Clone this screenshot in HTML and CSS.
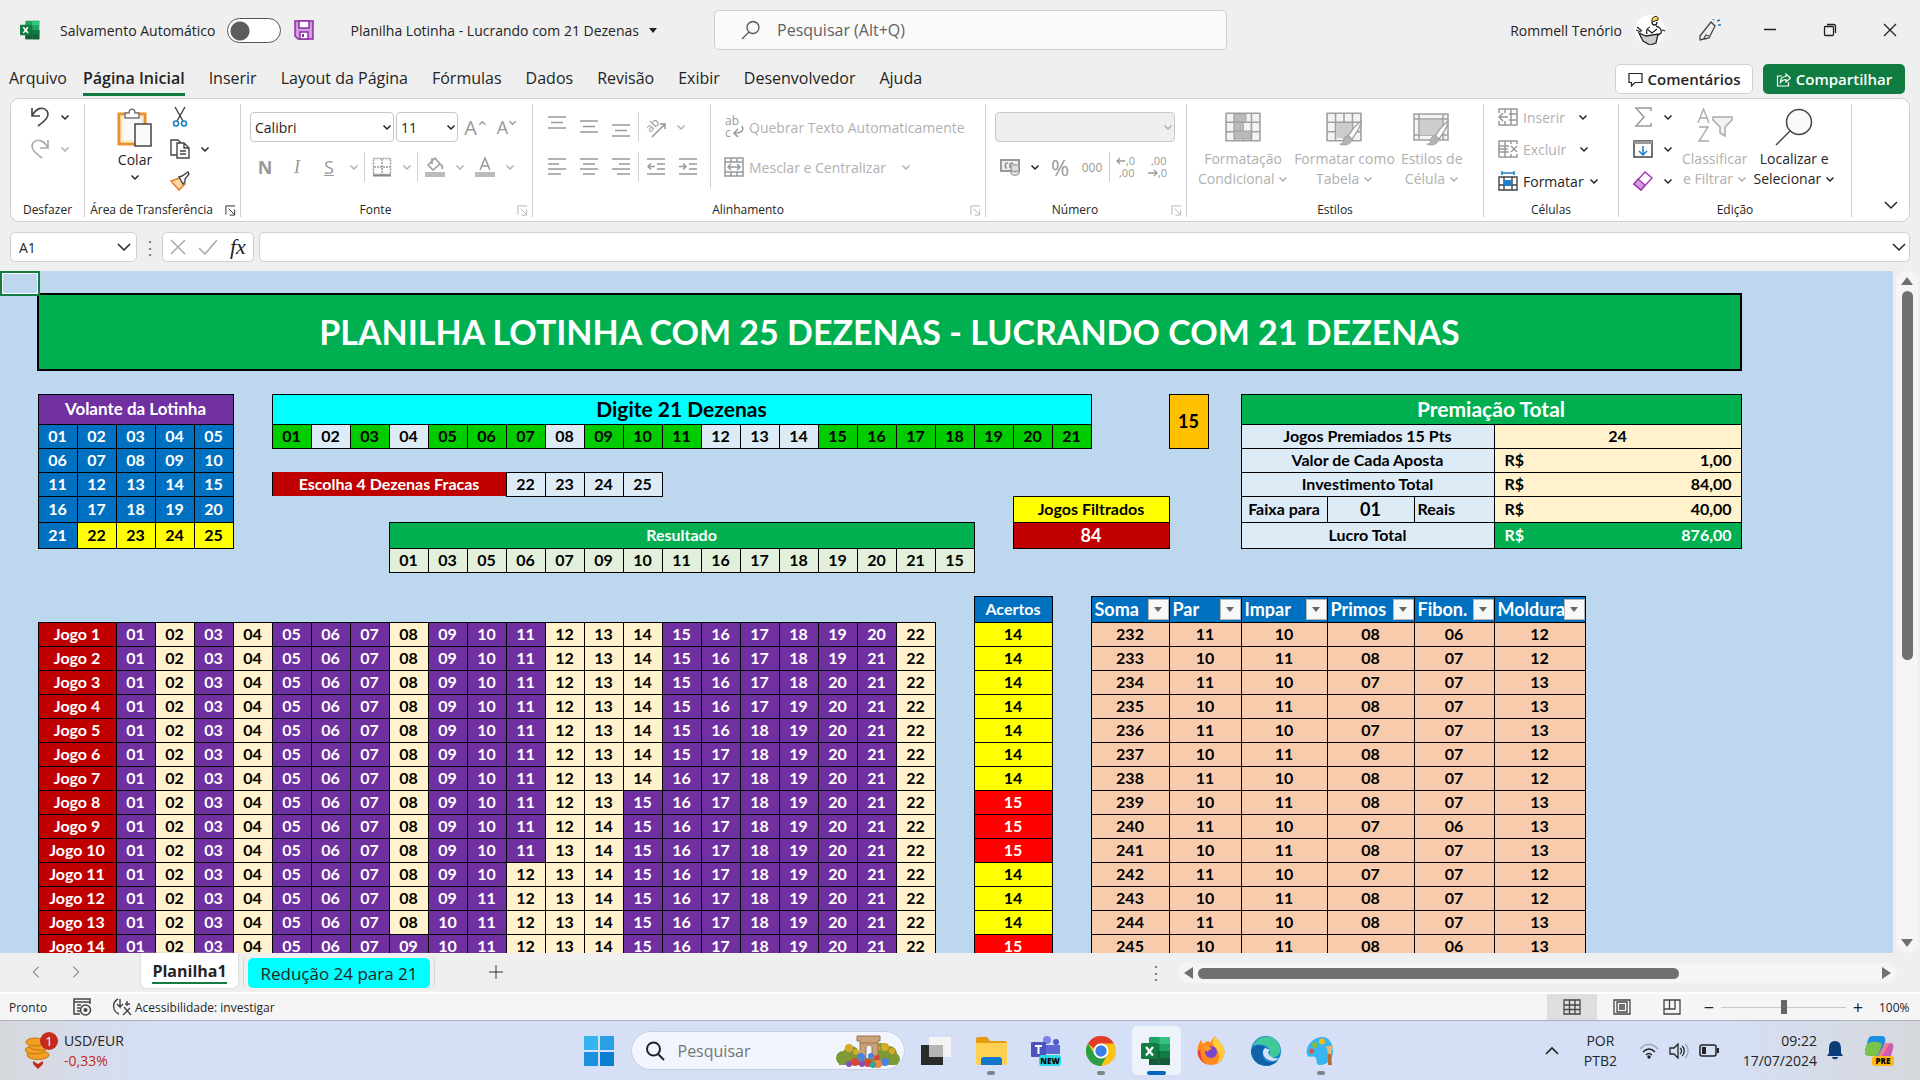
FILE: index.html
```html
<!DOCTYPE html>
<html lang="pt-BR">
  <head>
    <meta charset="UTF-8" />
    <meta name="viewport" content="width=device-width, initial-scale=1.0" />
    <title>Planilha Lotinha - Lucrando com 21 Dezenas</title>
    <link rel="stylesheet" href="styles.css">
  </head>
  <body>
    <svg class="sprite" aria-hidden="true">
      <symbol id="chev" viewBox="0 0 10 10"><path d="M1.5 3.5 5 7l3.500-3.500" fill="none" stroke="currentColor" stroke-width="1.500"/></symbol>
      <symbol id="chev-wide" viewBox="0 0 16 16"><path d="m2 5 6 6 6-6" fill="none" stroke="currentColor" stroke-width="1.500"/></symbol>
      <symbol id="launch" viewBox="0 0 12 12"><path d="M1 10.500V1h10M4 4l6 6M10.500 5v6H5" fill="none" stroke="currentColor"/></symbol>
      <symbol id="excel" viewBox="0 0 30 30">
        <path d="M9 1h19a1 1 0 0 1 1 1v27H8V2z" fill="#21a366"/><path d="M8 8h10.500v7H8z" fill="#107c41"/><path d="M18.500 1H28a1 1 0 0 1 1 1v6H18.500z" fill="#33c481"/><path d="M18.500 15H29v7H18.500zM8 15h10.500v14H8z" fill="#185c37"/><path d="M18.500 15H29v7H18.500z" fill="#107c41"/><path d="M18.500 22H29v7H18.500z" fill="#185c37"/>
        <rect x="0" y="7" width="17" height="16" rx="1.500" fill="#107c41"/><path d="m5 11 7 8.500M12 11l-7 8.500" stroke="#fff" stroke-width="2.300"/>
      </symbol>
      <symbol id="grid" viewBox="0 0 34 28"><path d="M1 1h32v26H1z" fill="#f3f3f3"/><path d="M1 1h32v26H1zM1 9.500h32M1 18.500h32M9 1v26M17 1v26M25 1v26" fill="none" stroke="#a0a0a0" stroke-width="1.500"/></symbol>
      <symbol id="brush" viewBox="0 0 24 28"><path d="M22.500 1C18 5 12 12 9 17l4 3.500C17 15 22 8 23 2z" fill="#fff" stroke="#a0a0a0" stroke-width="1.500"/><path d="M9 17c-4 0-5 3-5 6-1 2-2 3-4 3 4 2 12 1 13-5.500z" fill="#b5b5b5" stroke="#a0a0a0"/></symbol>
    </svg>

    <header class="titlebar">
      <svg class="i20"><use href="#excel"/></svg>
      <label class="autosave">Salvamento Automático <input type="checkbox" /></label>
      <button class="plain" aria-label="Salvar">
        <svg class="i20" viewBox="0 0 20 20"><path d="M1 1h18v18H4l-3-3z" fill="#d59be0" stroke="#8b2fa0" stroke-width="1.500"/><path d="M5 1h10v7H5zM6 12h8v7H6z" fill="#fff" stroke="#8b2fa0" stroke-width="1.500"/><path d="M8 14h2v3H8z" fill="#8b2fa0"/></svg>
      </button>
      <button class="plain doc-name">Planilha Lotinha - Lucrando com 21 Dezenas <svg width="8" height="5"><path d="M0 0h8L4 5z" fill="#242424"/></svg></button>
      <div class="search">
        <svg width="20" height="20" viewBox="0 0 20 20"><circle cx="12" cy="7.500" r="6" fill="none" stroke="#555" stroke-width="1.300"/><path d="m8 12-7 7" stroke="#555" stroke-width="1.300"/></svg>
        <input type="text" placeholder="Pesquisar (Alt+Q)" aria-label="Pesquisar" />
      </div>
      <div class="account">
        <span class="user">Rommell Tenório</span>
        <svg width="30" height="30" viewBox="0 0 30 30"><circle cx="15" cy="15" r="15" fill="#fff"/><path d="M17 4c2-4 7-3 6 1l-6 2z" fill="#ffd84a" stroke="#222"/><path d="M17 7c0 4 5 4 5 0M15 12c-3 1-4 4-3 7M21 11c4 1 6 4 5 7l-4 3M12 14l5 4 5-4M2 12l5 4M1 15l5 2M27 15l3 1" fill="none" stroke="#222" stroke-width="1.300"/><path d="m4 18 7 3 12-2-2 9-6 2-7-4z" fill="#ccc" stroke="#222" stroke-width="1.300"/></svg>
        <svg width="24" height="22" viewBox="0 0 24 22"><path d="M2 17 13 3l4 4-6 12-5 1-4 1zM6 19l2-3 3 1M13 3l4 4" fill="none" stroke="#444" stroke-width="1.300"/><path d="m15 1 1-1M19 2l3-1M20 6h3" stroke="#1e7fc8" stroke-width="1.600"/></svg>
      </div>
      <div class="window-buttons">
        <button class="plain" aria-label="Minimizar"><svg width="14" height="14"><path d="M1 6.500h12" stroke="#222" stroke-width="1.500"/></svg></button>
        <button class="plain" aria-label="Restaurar"><svg width="14" height="14"><path d="M1.500 4.500a1 1 0 0 1 1-1h7a1 1 0 0 1 1 1v7a1 1 0 0 1-1 1h-7a1 1 0 0 1-1-1zM4 1.500h6.500a2 2 0 0 1 2 2V10" fill="none" stroke="#222" stroke-width="1.300"/></svg></button>
        <button class="plain" aria-label="Fechar"><svg width="14" height="14"><path d="m1 1 12 12M13 1 1 13" stroke="#222" stroke-width="1.300"/></svg></button>
      </div>
    </header>

    <nav class="menu">
      <a href="#">Arquivo</a>
      <a href="#" class="active">Página Inicial</a>
      <a href="#">Inserir</a>
      <a href="#">Layout da Página</a>
      <a href="#">Fórmulas</a>
      <a href="#">Dados</a>
      <a href="#">Revisão</a>
      <a href="#">Exibir</a>
      <a href="#">Desenvolvedor</a>
      <a href="#">Ajuda</a>
      <button class="comments"><svg width="15" height="15"><path d="M1 1.500h13v9H7l-3.500 3.500v-3.500H1z" fill="none" stroke="#222" stroke-width="1.200"/></svg>Comentários</button>
      <button class="share"><svg width="15" height="15"><path d="M6 4H1.500v10h11v-4M4.500 10.500c0-4 2-6 5.500-6V2l4.500 4L10 10V7.500c-3 0-4 1-5.500 3z" fill="none" stroke="#fff" stroke-width="1.200"/></svg>Compartilhar</button>
    </nav>

    <section class="ribbon">
      <div class="group g-undo">
        <div class="stack">
          <div class="row"><button class="tool" aria-label="Desfazer"><svg width="20" height="22"><path d="M2 2v8h8M2 10C6 2 13 0 17 5c3 5-1 9-9 15" fill="none" stroke="#444" stroke-width="1.600"/></svg></button><button class="drop"><svg><use href="#chev"/></svg></button></div>
          <div class="row off"><button class="tool" aria-label="Refazer"><svg width="20" height="22"><path d="M18 2v8h-8M18 10C14 2 7 0 3 5c-3 5 1 9 9 15" fill="none" stroke="#aaa" stroke-width="1.600"/></svg></button><button class="drop"><svg><use href="#chev"/></svg></button></div>
        </div>
        <h2>Desfazer</h2>
      </div>

      <div class="group g-clip">
        <div class="cols">
          <button class="big">
            <svg width="36" height="40" viewBox="0 0 36 40"><path d="M2 6h26v30H2z" fill="#fff" stroke="#e8912d" stroke-width="3"/><path d="M5 9h20v24H5z" fill="#fafafa" stroke="#fbd7a5"/><path d="M8 10V5h4c0-5 6-5 6 0h4v5z" fill="#fff" stroke="#777" stroke-width="1.500"/><path d="M18 16h16v22H18z" fill="#fafafa" stroke="#444" stroke-width="1.500"/></svg>
            <span>Colar</span><svg class="c"><use href="#chev"/></svg>
          </button>
          <div class="stack">
            <div class="row"><button class="tool" aria-label="Recortar"><svg width="16" height="20"><path d="M3 0l8 14M13 0 5 14" stroke="#444" stroke-width="1.400"/><circle cx="4" cy="16.500" r="2.500" fill="none" stroke="#1e7fc8" stroke-width="1.600"/><circle cx="12" cy="16.500" r="2.500" fill="none" stroke="#1e7fc8" stroke-width="1.600"/></svg></button></div>
            <div class="row"><button class="tool" aria-label="Copiar"><svg width="20" height="20"><path d="M7 16H1V1h7l3 3M7 4h7l5 5v10H7zM14 4v5h5M10 12h6M10 15h6" fill="none" stroke="#444" stroke-width="1.400"/></svg></button><button class="drop"><svg><use href="#chev"/></svg></button></div>
            <div class="row"><button class="tool" aria-label="Pincel de Formatação"><svg width="20" height="20"><path d="m1 10 9-3 5 6-6 6z" fill="#fbd7a5" stroke="#e8822d" stroke-width="1.600"/><path d="m9 6 3-1 6-4 1 2-4 5v3l-2 2z" fill="#fff" stroke="#444" stroke-width="1.400"/></svg></button></div>
          </div>
        </div>
        <h2 class="launcher">Área de Transferência<svg class="l"><use href="#launch"/></svg></h2>
      </div>

      <div class="group g-font">
        <div class="lines">
          <div class="row">
            <div class="combo font-name"><select aria-label="Fonte"><option>Calibri</option></select><svg><use href="#chev"/></svg></div>
            <div class="combo font-size"><select aria-label="Tamanho da fonte"><option>11</option></select><svg><use href="#chev"/></svg></div>
            <button class="tool glyph big-a">A<svg><use href="#chev" transform="rotate(180 5 5)"/></svg></button>
            <button class="tool glyph">A<svg><use href="#chev"/></svg></button>
          </div>
          <div class="row off">
            <button class="tool glyph"><b>N</b></button>
            <button class="tool glyph serif"><i>I</i></button>
            <button class="tool glyph"><u>S</u></button>
            <button class="drop"><svg><use href="#chev"/></svg></button>
            <span class="sep"></span>
            <button class="tool" aria-label="Bordas"><svg width="20" height="20"><path d="M1.500 1.500h17v16h-17zM10 2v16M2 10h16" fill="none" stroke="#999" stroke-width="1.500" stroke-dasharray="2 1"/><path d="M1 18.500h18" stroke="#888" stroke-width="2"/></svg></button>
            <button class="drop"><svg><use href="#chev"/></svg></button>
            <span class="sep"></span>
            <button class="tool" aria-label="Cor de Preenchimento"><svg width="20" height="20"><path d="m3 8 7-7 5 6-7 6zM7 1v6M15 7c2 1 3 3 2 5" fill="none" stroke="#999" stroke-width="1.500"/><path d="M0 15h20v5H0z" fill="#bbb"/></svg></button>
            <button class="drop"><svg><use href="#chev"/></svg></button>
            <button class="tool" aria-label="Cor da Fonte"><svg width="20" height="20"><path d="M5 13 10 1l5 12M6.500 9h7" fill="none" stroke="#999" stroke-width="1.500"/><path d="M0 15h20v5H0z" fill="#bbb"/></svg></button>
            <button class="drop"><svg><use href="#chev"/></svg></button>
          </div>
        </div>
        <h2 class="launcher">Fonte<svg class="l dim"><use href="#launch"/></svg></h2>
      </div>

      <div class="group g-align">
        <div class="cols off">
          <div class="lines">
            <div class="row">
              <button class="tool top"><svg width="18" height="14"><path d="M0 1h18M3 6.500h12M0 12h18"/></svg></button>
              <button class="tool"><svg width="18" height="14"><path d="M0 1h18M3 6.500h12M0 12h18"/></svg></button>
              <button class="tool bottom"><svg width="18" height="14"><path d="M0 1h18M3 6.500h12M0 12h18"/></svg></button>
              <span class="sep"></span>
              <button class="tool" aria-label="Orientação"><svg width="26" height="26" viewBox="0 0 26 26"><text x="4" y="17" font-size="12" transform="rotate(-45 8 14)" fill="#999">ab</text><path d="M9 23 22 10M17 10h5v5"/></svg></button>
              <button class="drop"><svg><use href="#chev"/></svg></button>
            </div>
            <div class="row">
              <button class="tool"><svg width="18" height="18"><path d="M0 1h18M0 6h11M0 11h18M0 16h13"/></svg></button>
              <button class="tool"><svg width="18" height="18"><path d="M0 1h18M3 6h12M0 11h18M3 16h12"/></svg></button>
              <button class="tool"><svg width="18" height="18"><path d="M0 1h18M7 6h11M0 11h18M5 16h13"/></svg></button>
              <span class="sep"></span>
              <button class="tool"><svg width="18" height="18"><path d="M0 1h18M10 6h8M10 11h8M0 16h18M1 8.500h7M4 5.500l-3 3 3 3"/></svg></button>
              <button class="tool"><svg width="18" height="18"><path d="M0 1h18M10 6h8M10 11h8M0 16h18M0 8.500h7M4 5.500l3 3-3 3"/></svg></button>
            </div>
          </div>
          <div class="lines wide">
            <button class="wide-tool"><svg width="20" height="28" viewBox="0 0 20 28"><text x="1" y="12" font-size="12" fill="#999">ab</text><text x="1" y="24" font-size="12" fill="#999">c</text><path d="M18 13c2 4 0 7-7 7M14 16l-4 4 4 4"/></svg>Quebrar Texto Automaticamente</button>
            <button class="wide-tool"><svg width="20" height="20"><path d="M1 1h18v18H1zM1 5h18M1 15h18M7 1v4M13 1v4M7 15v4M13 15v4M4 10h12M7 7l-3 3 3 3M13 7l3 3-3 3"/></svg>Mesclar e Centralizar<svg class="c"><use href="#chev"/></svg></button>
          </div>
        </div>
        <h2 class="launcher">Alinhamento<svg class="l dim"><use href="#launch"/></svg></h2>
      </div>

      <div class="group g-num">
        <div class="lines">
          <div class="row"><div class="combo number off"><select aria-label="Formato de Número" disabled><option></option></select><svg><use href="#chev"/></svg></div></div>
          <div class="row">
            <button class="tool" aria-label="Moeda"><svg width="20" height="18"><path d="M1 2h18v11H1z" fill="#eee" stroke="#999" stroke-width="2"/><path d="M8 5c-3-1-4 5-1 5M10 10V6l3-1" fill="none" stroke="#888" stroke-width="1.400"/><path d="M11 9c0-3 8-3 8 0v6c0 3-8 3-8 0z" fill="#ddd" stroke="#888"/><path d="M11 12c2 2 6 2 8 0" fill="none" stroke="#888"/></svg></button>
            <button class="drop"><svg><use href="#chev"/></svg></button>
            <button class="tool glyph pct">%</button>
            <button class="tool glyph zeros">000</button>
            <span class="sep"></span>
            <button class="tool" aria-label="Aumentar Casas Decimais"><svg width="22" height="28" viewBox="0 0 22 28"><text x="10" y="12" font-size="11" fill="#999">,0</text><text x="3" y="24" font-size="11" fill="#999">,00</text><path d="M1 8h8M4 5 1 8l3 3" fill="none" stroke="#999" stroke-width="1.300"/></svg></button>
            <button class="tool" aria-label="Diminuir Casas Decimais"><svg width="22" height="28" viewBox="0 0 22 28"><text x="3" y="12" font-size="11" fill="#999">,00</text><text x="10" y="24" font-size="11" fill="#999">,0</text><path d="M0 20h9M6 17l3 3-3 3" fill="none" stroke="#999" stroke-width="1.300"/></svg></button>
          </div>
        </div>
        <h2 class="launcher">Número<svg class="l dim"><use href="#launch"/></svg></h2>
      </div>

      <div class="group g-style">
        <div class="cols off bigs">
          <button class="big"><svg width="36" height="34"><use href="#grid" width="36" height="30"/><path d="M9 2h12v8H9zM9 10h7v9H9zM9 19h17v8H9z" fill="#bbb" stroke="#a0a0a0"/></svg><span>Formatação<br>Condicional <svg><use href="#chev"/></svg></span></button>
          <button class="big"><svg width="38" height="34"><use href="#grid" width="36" height="30"/><path d="M10 11h16v15H10z" fill="#ccc"/><use href="#brush" x="11" y="8" width="28" height="26"/></svg><span>Formatar como<br>Tabela <svg><use href="#chev"/></svg></span></button>
          <button class="big"><svg width="38" height="34"><path d="M1 2h34v26H1zM1 7h34M1 23h34M6 2v26M30 2v26" fill="#f3f3f3" stroke="#a0a0a0" stroke-width="1.500"/><path d="M7 8h22v15H7z" fill="#ccc"/><use href="#brush" x="11" y="8" width="28" height="26"/></svg><span>Estilos de<br>Célula <svg><use href="#chev"/></svg></span></button>
        </div>
        <h2>Estilos</h2>
      </div>

      <div class="group g-cells">
        <div class="stack">
          <div class="row off"><button class="wide-tool"><svg width="20" height="18"><path d="M1 1h18v16H1zM1 6h18M1 12h18M7 1v16M13 1v16"/><path d="M0 5h11v8H0z" fill="#fff" stroke="none"/><path d="M1 9h9M5 5 1 9l4 4"/></svg>Inserir</button><button class="drop dark"><svg><use href="#chev"/></svg></button></div>
          <div class="row off"><button class="wide-tool"><svg width="20" height="18"><path d="M1 1h18v16H1zM1 6h18M1 12h18M7 1v16M13 1v16"/><path d="M11 4h9v10h-9z" fill="#fff" stroke="none"/><path d="m13 6 6 6M19 6l-6 6M0 9h10"/></svg>Excluir</button><button class="drop dark"><svg><use href="#chev"/></svg></button></div>
          <div class="row"><button class="wide-tool"><svg width="20" height="20"><path d="M1 6h18v13H1zM1 14h18M6 6v13M14 6v13" fill="none" stroke="#444" stroke-width="1.400"/><path d="M6 9h8v6H6z" fill="#1e7fc8"/><path d="M3 2h14M4 0v4M16 0v4" stroke="#1e7fc8" stroke-width="1.400"/></svg>Formatar<svg class="c"><use href="#chev"/></svg></button></div>
        </div>
        <h2>Células</h2>
      </div>

      <div class="group g-edit">
        <div class="cols">
          <div class="stack">
            <div class="row"><button class="tool" aria-label="AutoSoma"><svg width="18" height="20"><path d="M17 4V1H2l8 9-8 9h15v-3" fill="none" stroke="#999" stroke-width="1.500"/></svg></button><button class="drop"><svg><use href="#chev"/></svg></button></div>
            <div class="row"><button class="tool" aria-label="Preencher"><svg width="20" height="18"><path d="M1 1h18v16H1z" fill="#fff" stroke="#444" stroke-width="1.500"/><path d="M1 1h18v3H1z" fill="#999"/><path d="M10 6v8M6 11l4 4 4-4" fill="none" stroke="#1e7fc8" stroke-width="1.500"/></svg></button><button class="drop"><svg><use href="#chev"/></svg></button></div>
            <div class="row"><button class="tool" aria-label="Limpar"><svg width="20" height="20"><path d="m1 13 11-12 7 6L8 19z" fill="#fff" stroke="#a33fb5" stroke-width="1.500"/><path d="m1 13 4-5 7 6-4 5z" fill="#d59be0" stroke="#a33fb5" stroke-width="1.500"/></svg></button><button class="drop"><svg><use href="#chev"/></svg></button></div>
          </div>
          <div class="bigs">
            <button class="big off"><svg width="36" height="36"><path d="M1 15 6.500 1 12 15M3 10h7M2 19h9L2 33h10" fill="none" stroke="#aaa" stroke-width="1.400"/><path d="M16 9h19v3l-7 7v9l-5-3v-6l-7-7z" fill="#f3f3f3" stroke="#aaa" stroke-width="1.500"/></svg><span>Classificar<br>e Filtrar <svg><use href="#chev"/></svg></span></button>
            <button class="big"><svg width="38" height="38"><circle cx="24" cy="14" r="12.500" fill="#fafafa" stroke="#444" stroke-width="1.500"/><path d="M15 23 1 37" stroke="#444" stroke-width="1.500"/></svg><span>Localizar e<br>Selecionar <svg><use href="#chev"/></svg></span></button>
          </div>
        </div>
        <h2>Edição</h2>
      </div>
      <button class="plain collapse" aria-label="Recolher"><svg width="16" height="16"><use href="#chev-wide"/></svg></button>
    </section>

    <section class="formula-row">
      <div class="name-box"><input type="text" value="A1" aria-label="Caixa de nome" /><svg width="16" height="16"><use href="#chev-wide"/></svg></div>
      <span class="dots">⋮</span>
      <div class="fx">
        <svg width="16" height="16"><path d="m1 1 14 14M15 1 1 15" stroke="#aaa" stroke-width="1.500"/></svg>
        <svg width="20" height="16"><path d="m1 9 6 6L19 1" fill="none" stroke="#aaa" stroke-width="1.500"/></svg>
        <i>fx</i>
      </div>
      <div class="formula"><input type="text" aria-label="Barra de fórmulas" /><svg width="16" height="16"><use href="#chev-wide"/></svg></div>
    </section>

    <main class="workspace">
      <div class="sheet">
        <table>
          <colgroup>
            <col class="c-a"><col class="c-num" span="30"><col class="c-gap"><col class="c-impar"><col class="c-primos"><col class="c-fibon"><col class="c-moldura"><col class="c-valor">
          </colgroup>
          <tbody>
            <tr class="h23"><td class="selected"></td><td colspan="36"></td></tr>
            <tr class="h76"><td></td><td colspan="36" class="banner">PLANILHA LOTINHA COM 25 DEZENAS - LUCRANDO COM 21 DEZENAS</td></tr>
            <tr><td colspan="37"></td></tr>
            <tr class="h30">
              <td></td><td colspan="5" class="b purple t17">Volante da Lotinha</td>
              <td></td><td colspan="21" class="b cyan t21">Digite 21 Dezenas</td>
              <td colspan="2"></td><td rowspan="2" class="b orange t18">15</td>
              <td></td><td colspan="5" class="b green t21">Premiação Total</td>
            </tr>
            <tr>
              <td></td><td class="b blue">01</td><td class="b blue">02</td><td class="b blue">03</td><td class="b blue">04</td><td class="b blue">05</td>
              <td id="picks"></td>
              <td colspan="2"></td><td></td>
              <td colspan="3" class="b pale">Jogos Premiados 15 Pts</td><td colspan="2" class="b cream">24</td>
            </tr>
            <tr>
              <td></td><td class="b blue">06</td><td class="b blue">07</td><td class="b blue">08</td><td class="b blue">09</td><td class="b blue">10</td>
              <td colspan="26"></td>
              <td colspan="3" class="b pale">Valor de Cada Aposta</td><td colspan="2" class="b cream money"><div><span>R$</span><span>1,00</span></div></td>
            </tr>
            <tr>
              <td></td><td class="b blue">11</td><td class="b blue">12</td><td class="b blue">13</td><td class="b blue">14</td><td class="b blue">15</td>
              <td></td><td colspan="6" class="b weak">Escolha 4 Dezenas Fracas</td>
              <td class="b pale">22</td><td class="b pale">23</td><td class="b pale">24</td><td class="b pale">25</td>
              <td colspan="15"></td>
              <td colspan="3" class="b pale">Investimento Total</td><td colspan="2" class="b cream money"><div><span>R$</span><span>84,00</span></div></td>
            </tr>
            <tr class="h26">
              <td></td><td class="b blue">16</td><td class="b blue">17</td><td class="b blue">18</td><td class="b blue">19</td><td class="b blue">20</td>
              <td colspan="20"></td><td colspan="4" class="b yellow">Jogos Filtrados</td>
              <td colspan="2"></td>
              <td class="b pale">Faixa para</td><td class="b pale t18">01</td><td class="b pale left">Reais</td><td colspan="2" class="b cream money"><div><span>R$</span><span>40,00</span></div></td>
            </tr>
            <tr class="h26">
              <td></td><td class="b blue">21</td><td class="b yellow">22</td><td class="b yellow">23</td><td class="b yellow">24</td><td class="b yellow">25</td>
              <td colspan="4"></td><td colspan="15" class="b green">Resultado</td>
              <td></td><td colspan="4" class="b dark-red t18">84</td>
              <td colspan="2"></td>
              <td colspan="3" class="b pale">Lucro Total</td><td colspan="2" class="b green money"><div><span>R$</span><span>876,00</span></div></td>
            </tr>
            <tr><td colspan="10"></td><td id="result"></td><td colspan="12"></td></tr>
            <tr><td colspan="37"></td></tr>
            <tr class="h26 heads">
              <td colspan="25"></td><th colspan="2" class="b blue">Acertos</th><td></td>
              <th colspan="2" class="b blue"><div><span>Soma</span><button aria-label="Filtrar Soma"></button></div></th>
              <th colspan="2" class="b blue"><div><span>Par</span><button aria-label="Filtrar Par"></button></div></th>
              <th class="b blue"><div><span>Impar</span><button aria-label="Filtrar Impar"></button></div></th>
              <th class="b blue"><div><span>Primos</span><button aria-label="Filtrar Primos"></button></div></th>
              <th class="b blue"><div><span>Fibon.</span><button aria-label="Filtrar Fibon."></button></div></th>
              <th class="b blue"><div><span>Moldura</span><button aria-label="Filtrar Moldura"></button></div></th>
            </tr>
          </tbody>
          <tbody id="games"></tbody>
        </table>
      </div>
      <div class="vscroll"><span class="up"></span><span class="thumb"></span><span class="down"></span></div>
    </main>

    <section class="sheet-tabs">
      <button class="plain nav-prev" aria-label="Anterior"><svg width="14" height="14"><use href="#chev-wide"/></svg></button>
      <button class="plain nav-next" aria-label="Próxima"><svg width="14" height="14"><use href="#chev-wide"/></svg></button>
      <button class="sheet-tab current"><span>Planilha1</span></button>
      <button class="sheet-tab other">Redução 24 para 21</button>
      <button class="plain add" aria-label="Nova planilha"><svg width="14" height="14"><path d="M7 0v14M0 7h14" stroke="#333"/></svg></button>
      <span class="dots push">⋮</span>
      <div class="hscroll"><span class="left"></span><span class="thumb"></span><span class="right"></span></div>
    </section>

    <footer class="status">
      <span class="ready">Pronto</span>
      <svg width="19" height="18"><path d="M1 1h16v3H1zM1 4v12h6M4 7h4M4 10h3M4 13h3M17 4v2" fill="none" stroke="#444" stroke-width="1.500"/><circle cx="12.500" cy="12" r="5" fill="#f5f5f5" stroke="#444" stroke-width="1.500"/><circle cx="12.500" cy="12" r="2" fill="#444"/></svg>
      <svg class="access" width="20" height="18"><path d="M6 1C0 4 0 13 7 16M8 1v8l-3-3M8 9l3-3M12 9l7 8M18 10l-7 7M15 3v5M13 6h5" fill="none" stroke="#444" stroke-width="1.400"/></svg>
      <span>Acessibilidade: investigar</span>
      <div class="views">
        <button class="on" aria-label="Normal"><svg width="18" height="16"><path d="M1 1h16v14H1zM1 6h16M1 10.500h16M6.500 1v14M12 1v14" fill="none" stroke="#444" stroke-width="1.300"/></svg></button>
        <button aria-label="Layout da Página"><svg width="18" height="16"><path d="M1 1h16v14H1zM4 3h10v10H4zM6 6h6M6 8h6M6 10h6" fill="none" stroke="#444" stroke-width="1.300"/></svg></button>
        <button aria-label="Quebra de Página"><svg width="18" height="16"><path d="M1 1h16v14H1zM1 10h11V1M6.500 1v9" fill="none" stroke="#444" stroke-width="1.300"/></svg></button>
      </div>
      <button class="plain zoom-btn">−</button>
      <input type="range" min="10" max="190" value="100" aria-label="Zoom" />
      <button class="plain zoom-btn">+</button>
      <span class="percent">100%</span>
    </footer>

    <div class="taskbar">
      <div class="widget">
        <svg width="34" height="38" viewBox="0 0 34 38"><g fill="#f2a024" stroke="#c9730f"><ellipse cx="13" cy="23" rx="11" ry="4.500"/><ellipse cx="10" cy="18" rx="10" ry="4"/><ellipse cx="14" cy="14" rx="10" ry="4"/><ellipse cx="10" cy="10" rx="9" ry="4"/></g><path d="m8 29 5 3 5-3v3l-5 5-5-5z" fill="#c42b1c"/><circle cx="24" cy="9" r="9" fill="#c42b1c"/><text x="24" y="14" font-size="13" text-anchor="middle" fill="#fff">1</text></svg>
        <div>USD/EUR<br><span class="loss">-0,33%</span></div>
      </div>
      <div class="apps">
        <button class="app" aria-label="Iniciar"><svg width="30" height="30"><path d="M0 0h14v14H0z" fill="#36b4ef"/><path d="M16 0h14v14H16z" fill="#2a9fe6"/><path d="M0 16h14v14H0z" fill="#1b90dd"/><path d="M16 16h14v14H16z" fill="#0a7ed3"/></svg></button>
        <div class="task-search">
          <svg width="20" height="20"><circle cx="8.500" cy="8" r="6.500" fill="none" stroke="#222" stroke-width="2"/><path d="m13 13 6 6" stroke="#222" stroke-width="2"/></svg>
          <input type="text" placeholder="Pesquisar" aria-label="Pesquisar no Windows" />
          <svg width="64" height="34" viewBox="0 0 64 34">
            <g fill="#7d9a35"><circle cx="7" cy="24" r="7"/><circle cx="15" cy="20" r="8"/><circle cx="45" cy="17" r="8"/><circle cx="53" cy="20" r="8"/><circle cx="58" cy="25" r="6"/><path d="M3 24h58v7H3z"/></g>
            <g fill="#d9a927"><circle cx="13" cy="14" r="4"/><circle cx="20" cy="18" r="3"/><circle cx="49" cy="13" r="4"/><circle cx="41" cy="14" r="3"/><circle cx="56" cy="17" r="3"/></g>
            <path d="M21 2h23v5h-2v18h-6V14c0-4-6-4-6 0v11h-6V7h-3z" fill="#c9a27a" stroke="#9a744d"/><path d="M24 9h18" stroke="#9a744d"/>
            <g fill="#d8443c"><circle cx="19" cy="28" r="4"/><circle cx="32" cy="29" r="4"/><circle cx="41" cy="24" r="3"/></g><g fill="#4a83d8"><circle cx="25" cy="23" r="4"/><circle cx="49" cy="28" r="4"/><circle cx="35" cy="22" r="3"/></g><g fill="#8a4fb0"><circle cx="13" cy="30" r="3"/><circle cx="26" cy="30" r="3"/></g><circle cx="42" cy="30" r="4" fill="#ef8a3a"/><circle cx="37" cy="31" r="3" fill="#2aa6a6"/>
          </svg>
        </div>
        <button class="app" aria-label="Visão de tarefas"><svg width="30" height="28"><path d="M0 8h22v20H0z" fill="#2b2b2b"/><path d="M8 0h22v20H8z" fill="#f4f4f4"/><path d="M8 8h14v12H8z" fill="#b5b5b5"/></svg></button>
        <button class="app run" aria-label="Explorador de Arquivos"><svg width="31" height="28"><path d="M0 2a2 2 0 0 1 2-2h9l3 4h15a2 2 0 0 1 2 2v20H0z" fill="#e49b13"/><path d="M0 6h31v20a2 2 0 0 1-2 2H2a2 2 0 0 1-2-2z" fill="#ffd152"/><path d="M5 28v-5a3 3 0 0 1 3-3h15a3 3 0 0 1 3 3v5z" fill="#1277c9"/></svg></button>
        <button class="app" aria-label="Teams"><svg width="30" height="30"><circle cx="16" cy="4" r="4" fill="#7b83eb"/><circle cx="25" cy="6" r="3" fill="#5059c9"/><path d="M9 9h20v9H9z" fill="#5f68d2"/><rect y="6" width="15" height="15" rx="1" fill="#4b53bc"/><path d="M4 10h7M7.500 10v8" stroke="#fff" stroke-width="2"/><rect x="8" y="19" width="22" height="11" rx="3" fill="#27d9e8"/><text x="19" y="28" font-size="8" font-weight="800" text-anchor="middle">NEW</text></svg></button>
        <button class="app run" aria-label="Chrome"><svg width="30" height="30" viewBox="0 0 30 30"><circle cx="15" cy="15" r="15" fill="#fbc116"/><path d="M2 7.500A15 15 0 0 1 28 7.500H15a7.500 7.500 0 0 0-7 5z" fill="#e33b2e"/><path d="M2 7.500A15 15 0 0 0 15 30l6.500-11.500c-3 5-10 5-13 0z" fill="#2a9f48"/><circle cx="15" cy="15" r="7.500" fill="#fff"/><circle cx="15" cy="15" r="5.700" fill="#3a7de8"/></svg></button>
        <button class="app active" aria-label="Excel"><svg width="30" height="30"><use href="#excel"/></svg></button>
        <button class="app" aria-label="Firefox"><svg width="28" height="30" viewBox="0 0 28 30"><path d="M18 0c1 4 9 7 9.500 16A13.500 13 0 0 1 .5 16C0 11 2 7 4 4l2 4c2-2 4-3 6-3l1 2c2-3 3-5 5-7z" fill="#ff8a1f"/><path d="M18 0c1 4 9 7 9.500 16A13 13 0 0 1 20 27c4-6 2-13-3-17-2-3-1-6 1-10z" fill="#ffcf3a"/><path d="M.5 16c1 7 7 13 14 13-7 0-12-6-11-16z" fill="#ec3557"/><circle cx="14" cy="16" r="6" fill="#7a45d0"/><path d="M6 11c4-3 7 0 9 1-1 2-4 2-5 4z" fill="#ff9a2a"/></svg></button>
        <button class="app" aria-label="Edge"><svg width="30" height="30" viewBox="0 0 30 30"><circle cx="15" cy="15" r="15" fill="#1585d3"/><path d="M2 10C6 0 18-2 25 4c6 6 6 15-1 17-6 1-8-1-5-4 1-6-8-11-17-7z" fill="#40ca9b"/><path d="M0 15C2 8 12 8 14 12c-4 2-4 11 3 14 4 1 7 0 10-2-7 10-26 7-27-9z" fill="#1161a9"/><path d="M14 12c-5 5 0 13 8 13 3 0 4-1 6-3-3 1-6 0-7-1-4-1-5-6-2-7z" fill="#d5e0f6"/></svg></button>
        <button class="app run" aria-label="Paint"><svg width="30" height="30" viewBox="0 0 30 30"><path d="M15 1C6 2-1 11 1 18c1 5 5 1 8 3s0 7 4 8c7 1 14-5 14-14S22 0 15 1z" fill="#38b6f1"/><circle cx="9" cy="9" r="3" fill="#77c043"/><circle cx="16" cy="5.500" r="3" fill="#f5b921"/><circle cx="5.500" cy="15" r="2.500" fill="#e5513f"/><path d="M22 17h3l1 12h-4z" fill="#b66a35"/><path d="M20 10h7l-2 8h-3z" fill="#e5b47a"/></svg></button>
      </div>
      <div class="tray">
        <svg width="16" height="16"><path d="m2 11 6-6 6 6" fill="none" stroke="#222" stroke-width="1.600"/></svg>
        <div class="lang">POR<br>PTB2</div>
        <svg width="20" height="16"><path d="M1 6c5-6 13-6 18 0" fill="none" stroke="#9aa9bd" stroke-width="1.500"/><path d="M4 9c4-4 8-4 12 0M7 12c2-2 4-2 6 0" fill="none" stroke="#222" stroke-width="1.500"/><circle cx="10" cy="14" r="1.700" fill="#222"/></svg>
        <svg width="20" height="16"><path d="M1 5h4l4-4v14l-4-4H1zM11 5c2 1 2 5 0 6M13 3c3 2 3 8 0 10" fill="none" stroke="#222" stroke-width="1.300"/><path d="M16 1c4 3 4 11 0 14" fill="none" stroke="#9aa9bd" stroke-width="1.300"/></svg>
        <svg width="20" height="14"><rect x="1" y="1" width="16" height="11" rx="2" fill="none" stroke="#222" stroke-width="1.500"/><path d="M3 3h4v7H3zM18 4h2v5h-2z" fill="#222"/></svg>
        <div class="clock">09:22<br>17/07/2024</div>
        <svg width="16" height="19"><path d="M8 0c5 0 6 4 6 8v4l2 3H0l2-3V8c0-4 1-8 6-8z" fill="#0c3c78"/><path d="M5 16h6c0 3-6 3-6 0z" fill="#0c3c78"/></svg>
        <svg class="copilot" width="30" height="30"><path d="M7 0h10c3 0 4 3 3 6l-3 9c-1 4-3 5-6 5H4c-3 0-5-2-4-6L3 4c1-3 2-4 4-4z" fill="#1c8fe0"/><path d="M2 8c4-3 11-3 15 0l-3 9c-1 3-3 3-6 3H4c-3 0-5-2-4-5z" fill="#7cc34c"/><path d="M20 7h5c3 0 4 2 3 6l-2 7-2 4H14z" fill="#cf5ab5"/><path d="m20 7 5 0-9 15-4 0z" fill="#f27d8b"/><rect x="7" y="20" width="22" height="10" rx="3" fill="#fdb913"/><text x="18" y="28" font-size="8" font-weight="800" text-anchor="middle">PRE</text></svg>
      </div>
    </div>

    <script src="script.js"></script>
  </body>
</html>
```
FILE: styles.css
```css
* {
  box-sizing: border-box;
}
body {
  margin: 0;
  height: 100vh;
  display: flex;
  flex-direction: column;
  overflow: hidden;
  background: #efefef;
  color: #242424;
  font-family: "Open Sans", "Noto Sans", sans-serif;
  font-size: 14px;
}
button,
input,
select {
  font: inherit;
  color: inherit;
  margin: 0;
}
button {
  border: none;
  background: none;
  padding: 0;
  white-space: nowrap;
}
input {
  border: none;
  background: none;
  outline: none;
  min-width: 0;
}
svg {
  flex: none;
}
.sprite {
  position: absolute;
  width: 0;
  height: 0;
}
.plain {
  display: flex;
  align-items: center;
  justify-content: center;
}
.i20 {
  width: 20px;
  height: 20px;
}

/* title bar */
.titlebar {
  display: flex;
  align-items: center;
  flex: none;
  height: 60px;
  padding-left: 20px;
}
.autosave {
  display: flex;
  align-items: center;
  gap: 12px;
  margin: 0 13px 0 20px;
}
.autosave input {
  appearance: none;
  width: 54px;
  height: 25px;
  border: 1px solid #555;
  border-radius: 13px;
  background: radial-gradient(circle at 12px 12px, #5c5c5c 9px, #fff 10px);
}
.doc-name {
  margin-left: 36px;
  gap: 10px;
}
.search {
  width: 27%;
  height: 40px;
  margin: 0 0 0 57px;
  padding-left: 26px;
  display: flex;
  align-items: center;
  gap: 14px;
  background: #fafafa;
  border: 1px solid #d0d0d0;
  border-radius: 5px;
}
.search input {
  flex: 1;
  font-size: 16px;
}
.search input::placeholder {
  color: #616161;
}
.account {
  display: flex;
  align-items: center;
  gap: 13px;
  margin-left: auto;
}
.account svg:last-child {
  margin-left: 20px;
}
.window-buttons {
  display: flex;
  margin-left: 18px;
}
.window-buttons button {
  width: 60px;
  height: 40px;
}

/* menu */
.menu {
  display: flex;
  align-items: center;
  flex: none;
  height: 38px;
  padding: 0 15px 0 9px;
  gap: 24px;
}
.menu a {
  color: #242424;
  text-decoration: none;
  font-size: 16px;
  line-height: 30px;
  border-bottom: 3px solid transparent;
}
.menu a:first-child {
  margin-right: -8px;
}
.menu a.active {
  font-weight: 600;
  border-color: #107c41;
}
.comments,
.share {
  display: flex;
  align-items: center;
  justify-content: center;
  gap: 5px;
  height: 30px;
  width: 138px;
  border-radius: 5px;
  font-size: 15px;
  font-weight: 600;
}
.comments {
  margin-left: auto;
  background: #fff;
  border: 1px solid #d0d0d0;
}
.share {
  width: 142px;
  margin-left: -14px;
  background: #107c41;
  color: #fff;
}

/* ribbon */
.ribbon {
  display: flex;
  flex: none;
  height: 124px;
  margin: 0 10px;
  background: #fff;
  border: 1px solid #d0d0d0;
  border-radius: 9px;
}
.group {
  position: relative;
  display: flex;
  flex-direction: column;
  flex: none;
  margin: 5px 0 4px;
  border-right: 1px solid #d0d0d0;
}
.group h2 {
  margin: auto 0 0;
  font-size: 12px;
  font-weight: 400;
  line-height: 14px;
  text-align: center;
}
.group .launcher {
  padding-right: 22px;
}
.launcher .l {
  position: absolute;
  right: 4px;
  bottom: 1px;
  width: 11px;
  height: 11px;
}
.dim,
.off {
  color: #b0b0b0;
}
.g-undo { width: 74px; }
.g-clip { width: 156px; }
.g-font { width: 292px; }
.g-align { width: 453px; }
.g-num { width: 201px; }
.g-style { width: 297px; }
.g-cells { width: 135px; }
.g-edit { width: 233px; }
.row {
  display: flex;
  align-items: center;
  gap: 2px;
  height: 30px;
}
.lines {
  display: flex;
  flex-direction: column;
  gap: 10px;
  padding: 8px 0 0 9px;
}
.stack {
  display: flex;
  flex-direction: column;
  gap: 2px;
  margin-top: -2px;
}
.g-undo .stack {
  padding-left: 14px;
}
.cols,
.bigs {
  display: flex;
}
.tool {
  display: flex;
  align-items: center;
  justify-content: center;
  width: 30px;
  height: 30px;
}
.drop {
  display: flex;
  align-items: center;
  justify-content: center;
  width: 16px;
  height: 30px;
}
.drop svg,
.big span svg,
svg.c {
  width: 10px;
  height: 10px;
}
.dark {
  color: #242424;
}
.sep {
  width: 1px;
  height: 30px;
  background: #d0d0d0;
}
.glyph {
  color: #999;
  font-size: 18px;
}
.glyph svg {
  width: 9px;
  height: 9px;
  margin-bottom: 10px;
}
.big-a {
  font-size: 20px;
}
.serif {
  font-family: "Liberation Serif", serif;
}
.pct {
  font-size: 22px;
}
.zeros {
  font-size: 12px;
}
.combo {
  position: relative;
  height: 30px;
}
.combo select {
  appearance: none;
  width: 100%;
  height: 30px;
  padding: 0 4px;
  border: 1px solid #c8c8c8;
  border-radius: 4px;
  background: #fff;
  outline: none;
}
.combo svg {
  position: absolute;
  right: 2px;
  top: 10px;
  width: 10px;
  height: 10px;
}
.font-name { width: 144px; }
.font-size { width: 62px; }
.number { width: 180px; }
.number select {
  background: #efefef;
  opacity: 1;
}
.big {
  display: flex;
  flex-direction: column;
  align-items: center;
  line-height: 20px;
}
.g-clip .big {
  width: 60px;
  margin: 4px 0 0 20px;
  gap: 2px;
}
.g-align .row svg,
.g-align .wide-tool svg,
.off .wide-tool svg {
  fill: none;
  stroke: #999;
  stroke-width: 1.5;
}
.g-align text {
  stroke: none;
}
.top {
  padding-bottom: 8px;
}
.bottom {
  padding-top: 8px;
}
.wide {
  margin-left: 7px;
  border-left: 1px solid #d0d0d0;
  padding-left: 13px;
  height: 84px;
}
.wide-tool {
  display: flex;
  align-items: center;
  gap: 5px;
  height: 30px;
}
.g-align .c {
  margin-left: 10px;
}
.g-style .bigs {
  padding: 8px 0 0 11px;
  gap: 6px;
}
.g-style .big,
.g-edit .big {
  gap: 3px;
}
.g-cells .stack {
  padding-left: 14px;
}
.g-cells .row {
  gap: 10px;
}
.g-edit .stack {
  padding-left: 9px;
}
.g-edit .bigs {
  padding: 4px 0 0 6px;
  gap: 6px;
}
.g-edit .big svg:first-child {
  height: 38px;
}
.collapse {
  margin: auto 10px 8px auto;
}

/* formula bar */
.formula-row {
  display: flex;
  flex: none;
  height: 49px;
  padding: 10px 10px 9px;
}
.name-box,
.fx,
.formula {
  display: flex;
  align-items: center;
  height: 30px;
  background: #fff;
  border: 1px solid #d0d0d0;
  border-radius: 5px;
}
.name-box {
  width: 127px;
  padding: 0 4px 0 6px;
}
.name-box input,
.formula input {
  flex: 1;
}
.dots {
  width: 25px;
  text-align: center;
  font-size: 18px;
  line-height: 30px;
  color: #777;
}
.fx {
  width: 92px;
  padding: 0 7px;
  gap: 12px;
}
.fx i {
  font-family: "Liberation Serif", serif;
  font-size: 22px;
}
.formula {
  flex: 1;
  margin-left: 5px;
  padding: 0 2px 0 6px;
}

/* sheet */
.workspace {
  display: flex;
  flex: 1;
  min-height: 0;
}
.sheet {
  flex: 1;
  overflow: hidden;
  background: #bdd7ee;
}
.sheet table {
  width: 1741px;
  table-layout: fixed;
  border-collapse: collapse;
  font-family: Lato, Carlito, sans-serif;
  font-size: 16px;
  font-weight: 700;
  line-height: 18px;
  color: #000;
}
.c-a { width: 38px; }
.c-num { width: 39px; }
.c-gap { width: 33px; }
.c-impar { width: 86px; }
.c-primos { width: 87px; }
.c-fibon { width: 80px; }
.c-moldura { width: 91px; }
.c-valor { width: 156px; }
.sheet td,
.sheet th {
  padding: 0;
  text-align: center;
  white-space: nowrap;
}
.sheet tr { height: 24px; }
.sheet .h23 { height: 23px; }
.sheet .h26 { height: 26px; }
.sheet .h30 { height: 30px; }
.sheet .h76 { height: 76px; }
.sheet .b { border: 1px solid #000; }
.selected {
  position: relative;
}
.selected::after {
  content: "";
  position: absolute;
  inset: 0 -2px -2px 0;
  border: 2px solid #107c41;
  box-shadow: inset 0 0 0 1px #fff;
}
.sheet .banner {
  border: 2px solid #000;
  background: #00b050;
  color: #fff;
  font-size: 34px;
}
.purple { background: #7030a0; color: #fff; }
.blue { background: #0070c0; color: #fff; }
.cyan { background: #00ffff; }
.orange { background: #ffc000; }
.green { background: #00b050; color: #fff; }
.lime { background: #00cc00; }
.pale { background: #ddebf7; }
.cream { background: #fff2cc; }
.mint { background: #e2efda; }
.peach { background: #f8cbad; }
.yellow { background: #ffff00; }
.red { background: #ff0000; color: #fff; }
.dark-red { background: #c00000; color: #fff; }
.sheet .weak {
  background: #c00000;
  color: #fff;
  border-top: none;
  border-bottom: none;
}
.t21 { font-size: 21px; }
.t18 { font-size: 18px; }
.t17 { font-size: 17px; }
.sheet .left {
  text-align: left;
  padding-left: 3px;
}
.money div {
  display: flex;
  justify-content: space-between;
  padding: 0 9px 0 10px;
}
.heads div {
  display: flex;
  align-items: center;
  padding-left: 3px;
  font-size: 18px;
}
.heads span {
  flex: 1;
  min-width: 0;
  overflow: hidden;
  text-align: left;
}
.heads button {
  display: flex;
  align-items: center;
  justify-content: center;
  flex: none;
  width: 21px;
  height: 21px;
  background: #f7f8fa;
  border: 1px solid #b5b5b5;
}
.heads button::after {
  content: "";
  border: 4px solid transparent;
  border-top: 5px solid #666;
  border-bottom: none;
}
.vscroll {
  display: flex;
  flex-direction: column;
  align-items: center;
  width: 22px;
  margin: 0 2px 0 3px;
  padding: 6px 0;
  background: #f5f5f5;
  border-radius: 11px;
}
.vscroll .thumb {
  width: 11px;
  height: 55%;
  margin: 6px 0 auto;
  border-radius: 6px;
  background: #707070;
}
.up,
.down {
  border: 6px solid transparent;
  border-top: none;
  border-bottom: 8px solid #707070;
}
.down {
  transform: rotate(180deg);
}

/* sheet tabs */
.sheet-tabs {
  display: flex;
  align-items: flex-start;
  flex: none;
  height: 41px;
  padding-left: 29px;
  border-bottom: 2px solid #fff;
}
.sheet-tabs .plain {
  height: 38px;
  color: #999;
}
.nav-prev svg { transform: rotate(90deg); }
.nav-next svg { transform: rotate(-90deg); }
.nav-next { margin-left: 26px; }
.sheet-tab {
  font-size: 17px;
}
.current {
  width: 97px;
  height: 35px;
  margin-left: 58px;
  background: #fff;
  border-radius: 0 0 5px 5px;
  box-shadow: 0 0 2px #bbb;
  font-size: 16px;
  font-weight: 700;
}
.current span {
  border-bottom: 2px solid #107c41;
}
.other {
  height: 30px;
  width: 182px;
  margin: 5px 0 0 10px;
  background: #00ffff;
  border-radius: 5px;
  outline: 1px solid #d5d5d5;
  outline-offset: 4px;
  clip-path: inset(0 -6px);
}
.add {
  margin-left: 59px;
}
.push {
  margin: 4px 0 0 auto;
}
.hscroll {
  display: flex;
  align-items: center;
  width: 38%;
  height: 20px;
  margin: 10px 23px 0 10px;
  padding: 0 6px;
  background: #f5f5f5;
  border-radius: 10px;
}
.hscroll .thumb {
  width: 68%;
  height: 11px;
  margin: 0 auto 0 5px;
  border-radius: 6px;
  background: #707070;
}
.hscroll .left,
.hscroll .right {
  border: 6px solid transparent;
}
.hscroll .left {
  border-left: none;
  border-right: 9px solid #707070;
}
.hscroll .right {
  border-right: none;
  border-left: 9px solid #707070;
}

/* status bar */
.status {
  display: flex;
  align-items: center;
  flex: none;
  height: 26px;
  padding: 0 10px 0 9px;
  background: #f5f5f5;
  font-size: 12px;
}
.ready {
  width: 64px;
}
.access {
  margin: 0 3px 0 20px;
}
.views {
  display: flex;
  height: 26px;
  margin-left: auto;
}
.views button {
  display: flex;
  align-items: center;
  justify-content: center;
  width: 50px;
}
.views .on {
  background: #dedede;
}
.zoom-btn {
  width: 24px;
  font-size: 18px;
}
.status input {
  appearance: none;
  width: 125px;
  height: 14px;
  background: linear-gradient(#c8c8c8, #c8c8c8) center / 100% 1px no-repeat;
}
.status input::-webkit-slider-thumb {
  appearance: none;
  width: 6px;
  height: 14px;
  background: #666;
}
.percent {
  margin-left: 9px;
  width: 31px;
}

/* taskbar */
.taskbar {
  display: flex;
  align-items: center;
  flex: none;
  height: 60px;
  padding: 0 25px;
  border-top: 1px solid #a9b1c0;
  background: linear-gradient(90deg, #d6d8dc, #d5dff5 8%, #d5dff5 90%, #d6d8dc);
  line-height: 20px;
}
.widget {
  flex: 1;
  display: flex;
  align-items: center;
  gap: 5px;
}
.loss {
  color: #c42b1c;
}
.apps {
  display: flex;
  align-items: center;
}
.app {
  display: flex;
  align-items: center;
  justify-content: center;
  position: relative;
  width: 49px;
  height: 49px;
  margin: 0 3px;
  border-radius: 5px;
}
.app.active {
  background: #eef2fb;
}
.run::after,
.active.app::after {
  content: "";
  position: absolute;
  bottom: 0;
  width: 8px;
  height: 4px;
  border-radius: 2px;
  background: #808388;
}
.active.app::after {
  width: 19px;
  background: #0067c0;
}
.task-search {
  display: flex;
  align-items: center;
  width: 274px;
  height: 39px;
  margin: 0 4px;
  padding: 0 4px 0 13px;
  gap: 11px;
  background: #f2f5fd;
  border: 1px solid #c5cede;
  border-radius: 20px;
}
.task-search input {
  flex: 1;
  font-size: 16px;
}
.tray {
  flex: 1;
  display: flex;
  align-items: center;
  justify-content: flex-end;
  gap: 10px;
}
.lang {
  text-align: center;
  margin: 0 12px 0 14px;
}
.clock {
  width: 88px;
  text-align: right;
}
.copilot {
  margin-left: 12px;
}
```
FILE: script.js
```js
const drawn = [1, 3, 5, 6, 7, 9, 10, 11, 16, 17, 18, 19, 20, 21, 15];
const primes = [2, 3, 5, 7, 11, 13, 17, 19, 23];
const fibonacci = [1, 2, 3, 5, 8, 13, 21];
const frame = [1, 2, 3, 4, 5, 6, 10, 11, 15, 16, 20, 21, 22, 23, 24, 25];

const pad = (n) => String(n).padStart(2, "0");
const cell = (n, color, span = 1) =>
  `<td class="b ${color}" colspan="${span}">${n}</td>`;
const range = (n) => Array.from({ length: n }, (_, i) => i + 1);

document.getElementById("picks").insertAdjacentHTML(
  "afterend",
  range(21)
    .map((n) => cell(pad(n), drawn.includes(n) ? "lime" : "pale"))
    .join("")
);

const result = document.getElementById("result");
result.outerHTML = drawn.map((n) => cell(pad(n), "mint")).join("");

// each game is 01-22 with a single number left out
let rows = "";
for (let game = 1; game <= 14; game++) {
  const numbers = range(22).filter((n) => n !== 22 - game);
  const count = (test) => pad(numbers.filter(test).length);
  const hits = numbers.filter((n) => drawn.includes(n)).length;
  rows += `<tr><td></td>${cell("Jogo " + game, "dark-red", 2)}`;
  rows += numbers
    .map((n) => cell(pad(n), drawn.includes(n) ? "purple" : "cream"))
    .join("");
  rows += `<td></td>${cell(hits, hits === 15 ? "red" : "yellow", 2)}<td></td>`;
  rows += cell(numbers.reduce((a, b) => a + b), "peach", 2);
  rows += cell(count((n) => n % 2 === 0), "peach", 2);
  rows += cell(count((n) => n % 2 === 1), "peach");
  rows += cell(count((n) => primes.includes(n)), "peach");
  rows += cell(count((n) => fibonacci.includes(n)), "peach");
  rows += cell(count((n) => frame.includes(n)), "peach") + "</tr>";
}
document.getElementById("games").innerHTML = rows;
```
